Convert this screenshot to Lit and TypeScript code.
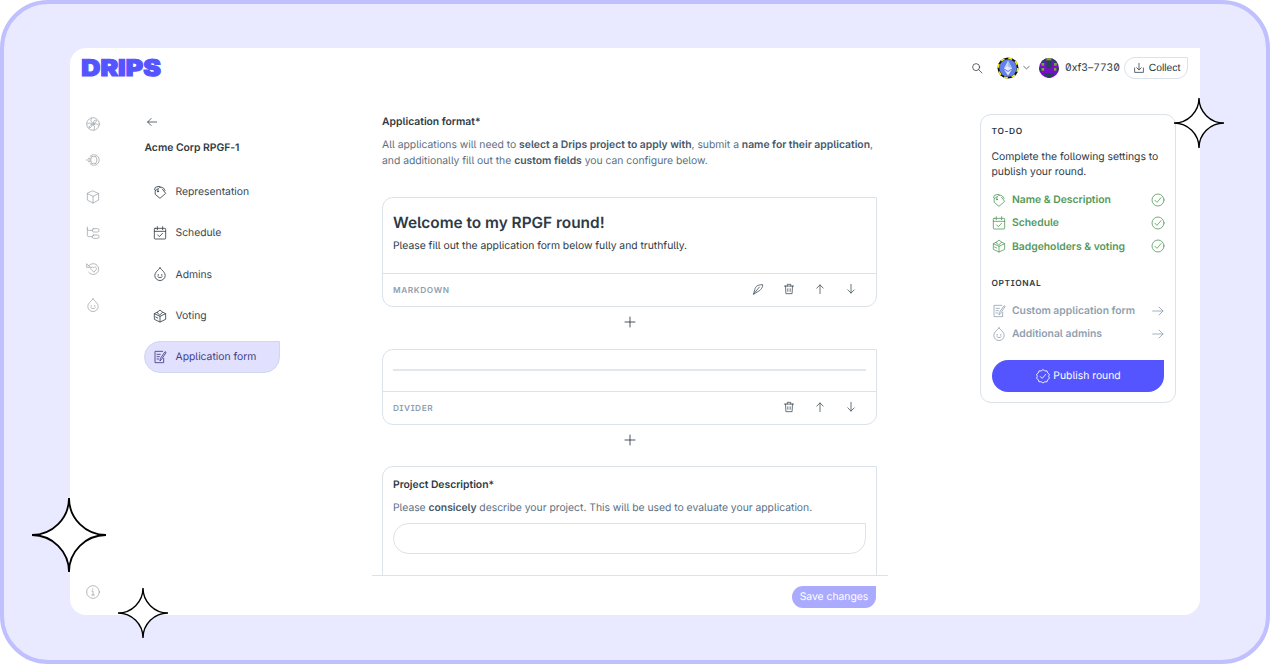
import { LitElement, html, css, svg } from "lit";
import { customElement, property } from "lit/decorators.js";

const drop = svg`<path d="M12 2.800C9 6.600 4.200 9.600 4.200 14a7.800 7.800 0 0 0 15.600 0C19.800 9.600 15 6.600 12 2.800Z"/><path d="M9.300 12.600v1.400M14.700 12.600v1.400M8.800 16.200c1.800 1.600 4.600 1.600 6.400 0"/>`;
const box = svg`<path d="M12 3 20.500 6.800v9.800L12 21 3.500 16.600V6.800ZM3.500 6.800 12 11l8.500-4.200M12 11v10"/>`;

const ICONS: Record<string, unknown> = {
  drop,
  box,
  arrowLeft: svg`<path d="M20 12H4.500M10.500 6l-6 6 6 6"/>`,
  arrowRight: svg`<path d="M4 12h15.500M13.500 6l6 6-6 6"/>`,
  arrowUp: svg`<path d="M12 20V5M6.500 10.500 12 5l5.500 5.500"/>`,
  arrowDown: svg`<path d="M12 4v15M6.500 13.500 12 19l5.500-5.500"/>`,
  plus: svg`<path d="M12 4.500v15M4.500 12h15"/>`,
  search: svg`<circle cx="10.500" cy="10.500" r="6"/><path d="m15 15 5.500 5.500"/>`,
  chevron: svg`<path d="m7 10 5 4.500 5-4.500"/>`,
  collect: svg`<path d="M4.500 12v7.500h15V12M12 4v11M8 11.500l4 3.700 4-3.700"/>`,
  tag: svg`<path d="M8.500 7.500 4.800 10v5.500L12 21.500l8.500-7.500-5-6.500"/><path d="M5.500 9.500 3.800 8.500 5 5l5.500-1.500 2 1M9 11.500C8 7.500 10 4.500 13.500 4.700c3 .200 5 2 6 5"/><circle cx="9" cy="11.300" r=".7" fill="currentColor"/>`,
  calendar: svg`<rect x="3.500" y="5" width="17" height="16" rx="1.200"/><path d="M3.500 9.500h17M8 2.500V7M16 2.500V7M8.500 14.800l2.500 2.700 4.800-5"/>`,
  vote: svg`<path d="M8 6.200 3.500 8.500v8.500l8.500 4 8.500-4V8.500L16 6.200M3.500 8.500 12 12.500l8.500-4M12 12.500V21"/><path d="m8 6.500 4-3.500 4 3.500-4 3.500ZM5.500 13.500l3 1.500"/>`,
  form: svg`<path d="M17.500 14v6.500H4.500v-17H16M7.500 8h5M7.500 11.500h3.500M7.500 15h2.500"/><path d="m12 17.500.700-3.500L19.500 4l1.700 1.200-6.500 9.800Z"/>`,
  feather: svg`<path d="M4.500 20.500 6.500 13C8 7 11 5 20 4.500 20 10 17.500 12 15 14.500L8.500 18.500Z"/><path d="M4.500 20.500 14.500 8.500"/>`,
  trash: svg`<path d="M4 7h16M6 7l.700 13h10.600L18 7M9 7V4h6v3M10 11.500v4.500M14 11.500v4.500"/>`,
  check: svg`<circle cx="12" cy="12" r="9"/><path d="m7.500 12.500 3 3 6-7"/>`,
  seal: svg`<path d="m12 2.500 2.700 1.900 3.300-.100 1 3.100 2.600 2-1 3.100 1 3.100-2.600 2-1 3.100-3.300-.100L12 22.500l-2.700-1.900-3.300.100-1-3.100-2.600-2 1-3.100-1-3.100 2.600-2 1-3.100 3.300.100Z"/><path d="m8 12.800 2.800 2.800 5.200-6"/>`,
  info: svg`<circle cx="12" cy="12" r="9.500"/><path d="M10.200 10.500H12V16.500M10 16.500h4.200M11.700 7v1"/>`,
  explore: svg`<circle cx="12" cy="12" r="9.500"/><circle cx="12" cy="12" r="1.600"/><path d="M11 10.500C8 8 8.500 5 10 3.500M13 10.500C12 7 15 5.500 17 6.500c.500 2-1 4-3 4.500M13.600 12.500c3-1.500 5-.500 6.500 1.500M13 13.500c2 2 1.500 5 .500 7M11 13.500c-1 3-3 4.500-5 4.500-.500-2 1-4.500 4-5M10.300 12c-2.500-2-5-1.500-6.500-.500"/>`,
  stream: svg`<path d="M7.500 6.500a8 8 0 1 1 0 11"/><path d="M10.500 6.500c-2.500 3-2.500 8 0 11M16 6.500c2.500 3 2.500 8 0 11M10.500 6.500c2 1 3.500 1 5.500 0M10.500 17.500c2-1 3.500-1 5.500 0M2 12h6M5 9.500h3M5 14.500h3"/>`,
  tree: svg`<path d="M3.500 3v12c0 1.800.700 2.500 2.500 2.500h5M3.500 5.500c0 1.800.700 2.500 2.500 2.500h5"/><rect x="11" y="5.500" width="10" height="5" rx="2"/><rect x="11" y="15" width="10" height="5" rx="2"/>`,
  retro: svg`<path d="M6 6.800a8.200 8.200 0 1 1-.500 10"/><path d="M2.500 4.500v5h5M3 5l5 4M13 16.500l-4-4c-1.500-2 1.500-5 4-2.500 2.500-2.500 5.500.500 4 2.500Z"/>`,
};

@customElement("drip-icon")
class DripIcon extends LitElement {
  @property() name = "";
  static styles = css`
    :host { display: inline-flex; flex: none; width: 16px; height: 16px; }
    svg { width: 100%; height: 100%; fill: none; stroke: currentColor; stroke-width: var(--stroke, 1.300); stroke-linejoin: round; stroke-linecap: round; }
  `;
  render() {
    return html`<svg viewBox="0 0 24 24">${ICONS[this.name]}</svg>`;
  }
}

const BLOCKIES = ["PDDGGDDP", "PDPDDPDP", "PGPDDPGP", "PPPDDPPP", "DGPPPPGD", "PPPPPPPP", "PPDDDDPP", "PPPDDPPP"];
const BLOCK_COLORS: Record<string, string> = { P: "#7a0ccf", D: "#1d4a4c", G: "#7aa82c" };

@customElement("app-root")
class AppRoot extends LitElement {
  static styles = css`
    :host { display: block; font-family: Inter, "Liberation Sans", sans-serif; font-size: 10.370px; letter-spacing: -0.015px; line-height: 15.400px; color: #2e3a45; font-feature-settings: "cv05", "cv08", "zero"; text-rendering: geometricPrecision; }
    * { box-sizing: border-box; }
    .frame { position: relative; width: 1270px; height: 664px; background: #e9e9ff; border: 4px solid #c0c0ff; border-radius: 48px; padding: 44px 66px 45px; }
    .app { height: 567px; background: #fff; border-radius: 16px 0 16px 16px; display: flex; flex-direction: column; }
    header { height: 39px; flex: none; display: flex; align-items: center; padding: 0 12px 0 11px; }
    .logo { width: 81px; height: 24px; margin-right: auto; overflow: visible; }
    .logo text { font: 900 23px Inter, sans-serif; letter-spacing: 0; fill: #5555ff; stroke: #5555ff; stroke-width: 1.200px; }
    .search { width: 14px; height: 14px; margin-right: 12.500px; }
    .ava { width: 22px; height: 22px; }
    .chev { width: 13px; height: 13px; margin: 0 5.500px 0 1px; }
    .addr { margin: 0 4px 0 4.500px; font-feature-settings: "zero", "tnum"; }
    .collect { width: 64px; height: 22px; padding-top: 1px; border: 1px solid #dbe2ea; border-radius: 11px 0 11px 11px; display: flex; align-items: center; justify-content: center; gap: 3px; font-family: "Liberation Sans", sans-serif; }
    .collect span { padding-top: 1px; }
    .collect drip-icon { width: 14px; height: 14px; }
    .body { flex: 1; display: flex; min-height: 0; }
    .rail { width: 45px; padding: 29.300px 0 15px; display: flex; flex-direction: column; align-items: center; gap: 20.200px; color: #9aa0a6; --stroke: 1.100; }
    .rail .info { margin-top: auto; }
    .side { width: 136px; margin-left: 29px; padding-top: 28px; display: flex; flex-direction: column; }
    .back { width: 14px; height: 14px; margin: 0 0 11px 1px; }
    .side h2 { margin: 0 0 20.500px 0.500px; font-size: 10.370px; font-weight: 600; line-height: 15px; white-space: nowrap; }
    nav { display: flex; flex-direction: column; gap: 8.800px; }
    .item { height: 32.500px; border: 1px solid transparent; border-radius: 16px 0 16px 16px; display: flex; align-items: center; gap: 7.500px; padding-left: 7px; color: #3a4651; }
    .item.on { background: #e1e0ff; border-color: #d0d8ee; color: #443f82; }
    .main { width: 516px; margin-left: 92px; display: flex; flex-direction: column; min-height: 0; }
    .scroll { height: 488px; flex: none; overflow: hidden; padding: 27.200px 11px 0 10px; }
    .scroll h3, .project h3 { margin: 0; font-size: 10.370px; font-weight: 600; line-height: 15px; }
    .intro { margin: 8.300px 0 28.700px; color: #5c6f82; white-space: nowrap; }
    b { font-weight: 600; }
    .intro b, .help b { color: #465768; }
    .card { border: 1px solid #dbe2ea; border-radius: 11px 0 11px 11px; }
    .welcome { height: 75px; padding: 14px 10px 0; }
    .welcome h1 { margin: 0; font-size: 15.430px; line-height: 22px; font-weight: 600; }
    .welcome p { margin: 3.700px 0 0; }
    .foot { height: 33px; border-top: 1px solid #dbe2ea; display: flex; align-items: center; padding: 0 18px 0 10px; gap: 17px; color: #3c4750; }
    .foot span { margin-right: auto; padding-top: 1.300px; font-size: 8.250px; font-weight: 600; letter-spacing: 0.620px; color: #8e9fb0; }
    .foot drip-icon { width: 14px; height: 14px; margin-bottom: 1px; }
    .add { height: 41.600px; display: flex; justify-content: center; padding-top: 7.500px; }
    .rule { height: 41px; padding: 19.500px 10px 0; }
    .rule div { height: 2px; background: #e1e7ee; }
    .project { height: 140px; padding: 10.300px 10px; }
    .help { margin: 8px 0 7.600px; color: #5c6f82; letter-spacing: -0.025px; }
    .input { height: 31px; border: 1px solid #dbe2ea; border-radius: 16px 0 16px 16px; }
    .save { border-top: 1px solid #dbe2ea; height: 40px; padding: 10px 12px 0 0; display: flex; justify-content: flex-end; }
    .save span { width: 84px; height: 22px; line-height: 22px; text-align: center; color: #fff; background: #aaaaff; border-radius: 11px 0 11px 11px; }
    aside { width: 196px; height: 289px; margin: 27px 0 0 92px; border: 1px solid #dbe2ea; border-radius: 11px; padding: 9.700px 11px 0 10.500px; }
    aside h4 { margin: 0; font-size: 8.400px; line-height: 15px; font-weight: 600; letter-spacing: 0.620px; }
    aside p { margin: 9px 0 8.700px; white-space: nowrap; }
    .todo { height: 23.300px; display: flex; align-items: center; gap: 4.500px; font-weight: 600; color: #53995a; --stroke: 1.200; }
    .todo span { margin-right: auto; }
    .todo drip-icon:first-child { margin-left: -0.500px; margin-right: 0.500px; }
    .todo drip-icon:last-child { margin-right: -1.500px; }
    .optional h4 { margin: 18.500px 0 7.500px; }
    .optional .todo { color: #8e9fb0; }
    .publish { height: 32px; margin: 14.500px 0 0 0.500px; border-radius: 16px 0 16px 16px; background: #5555ff; color: #fff; display: flex; align-items: center; justify-content: center; gap: 2px; }
    .star { position: absolute; overflow: hidden; fill: #fff; stroke: #000; stroke-miterlimit: 4; }
    .s1 { left: 28px; top: 494px; width: 74px; height: 74px; }
    .s2 { left: 114px; top: 584px; width: 50px; height: 50px; }
    .s3 { left: 1170px; top: 94px; width: 50px; height: 50px; }
  `;

  private star(cls: string, size: number, w: number) {
    const c = size / 2;
    const d = `M${c} 0A${c} ${c} 0 0 0 ${size} ${c}A${c} ${c} 0 0 0 ${c} ${size}A${c} ${c} 0 0 0 0 ${c}A${c} ${c} 0 0 0 ${c} 0Z`;
    return html`<svg class="star ${cls}" viewBox="0 0 ${size} ${size}" stroke-width=${w}><path d=${d} /></svg>`;
  }

  private foot(label: string, icons: string[]) {
    return html`<div class="foot"><span>${label}</span>${icons.map((i) => html`<drip-icon name=${i}></drip-icon>`)}</div>`;
  }

  private todo(icon: string, label: string, end: string) {
    return html`<div class="todo"><drip-icon name=${icon}></drip-icon><span>${label}</span><drip-icon name=${end}></drip-icon></div>`;
  }

  render() {
    const nav = [["tag", "Representation"], ["calendar", "Schedule"], ["drop", "Admins"], ["vote", "Voting"], ["form", "Application form"]];
    return html`
      <div class="frame">
        <div class="app">
          <header>
            <svg class="logo" viewBox="0 0 81 24"><text x="0.300" y="20.100" textLength="79.500" lengthAdjust="spacingAndGlyphs">DRIPS</text></svg>
            <drip-icon class="search" name="search"></drip-icon>
            <svg class="ava" viewBox="0 0 22 22">
              <circle cx="11" cy="11" r="10.500" fill="#111" />
              <circle cx="11" cy="11" r="9.700" fill="none" stroke="#f5ee0a" stroke-width="1.700" stroke-dasharray="3.800 3.818" />
              <circle cx="11" cy="11" r="8.700" fill="#627eea" />
              <path d="M11 3.500 7 11.200l4 2.600 4-2.600Z" fill="#c9d4fa" /><path d="M11 3.500v10.300l4-2.600Z" fill="#a9baf5" />
              <path d="m7 12.400 4 6 4-6-4 2.600Z" fill="#dfe6fd" /><path d="M7 11.200 11 9.400l4 1.800-4 2.600Z" fill="#f4f6ff" opacity=".7" />
            </svg>
            <drip-icon class="chev" name="chevron"></drip-icon>
            <svg class="ava" viewBox="-1 -1 22 22">
              <clipPath id="round"><circle cx="10" cy="10" r="10" /></clipPath>
              <g clip-path="url(#round)">
                <rect width="20" height="20" fill=${BLOCK_COLORS.P} />
                ${BLOCKIES.map((row, y) => [...row].map((c, x) => c === "P" ? "" : svg`<rect x=${x * 2.5} y=${y * 2.5} width="2.700" height="2.700" fill=${BLOCK_COLORS[c]} />`))}
              </g>
            </svg>
            <span class="addr">0xf3–7730</span>
            <div class="collect"><drip-icon name="collect"></drip-icon><span>Collect</span></div>
          </header>
          <div class="body">
            <div class="rail">
              ${["explore", "stream", "box", "tree", "retro", "drop"].map((n) => html`<drip-icon name=${n}></drip-icon>`)}
              <drip-icon class="info" name="info"></drip-icon>
            </div>
            <div class="side">
              <drip-icon class="back" name="arrowLeft"></drip-icon>
              <h2>Acme Corp RPGF-1</h2>
              <nav>
                ${nav.map(([i, t]) => html`<div class="item ${i === "form" ? "on" : ""}"><drip-icon name=${i}></drip-icon><span>${t}</span></div>`)}
              </nav>
            </div>
            <div class="main">
              <div class="scroll">
                <h3>Application format*</h3>
                <div class="intro">All applications will need to <b>select a Drips project to apply with</b>, submit a <b>name for their application</b>,<br />and additionally fill out the <b>custom fields</b> you can configure below.</div>
                <div class="card">
                  <div class="welcome"><h1>Welcome to my RPGF round!</h1><p>Please fill out the application form below fully and truthfully.</p></div>
                  ${this.foot("MARKDOWN", ["feather", "trash", "arrowUp", "arrowDown"])}
                </div>
                <div class="add"><drip-icon name="plus"></drip-icon></div>
                <div class="card">
                  <div class="rule"><div></div></div>
                  ${this.foot("DIVIDER", ["trash", "arrowUp", "arrowDown"])}
                </div>
                <div class="add"><drip-icon name="plus"></drip-icon></div>
                <div class="card project">
                  <h3>Project Description*</h3>
                  <div class="help">Please <b>consicely</b> describe your project. This will be used to evaluate your application.</div>
                  <div class="input"></div>
                </div>
              </div>
              <div class="save"><span>Save changes</span></div>
            </div>
            <aside>
              <h4>TO-DO</h4>
              <p>Complete the following settings to<br />publish your round.</p>
              ${this.todo("tag", "Name & Description", "check")}
              ${this.todo("calendar", "Schedule", "check")}
              ${this.todo("vote", "Badgeholders & voting", "check")}
              <div class="optional">
                <h4>OPTIONAL</h4>
                ${this.todo("form", "Custom application form", "arrowRight")}
                ${this.todo("drop", "Additional admins", "arrowRight")}
              </div>
              <div class="publish"><drip-icon name="seal"></drip-icon>Publish round</div>
            </aside>
          </div>
        </div>
        ${this.star("s1", 74, 1.8)} ${this.star("s2", 50, 1.4)} ${this.star("s3", 50, 1.4)}
      </div>
    `;
  }
}
